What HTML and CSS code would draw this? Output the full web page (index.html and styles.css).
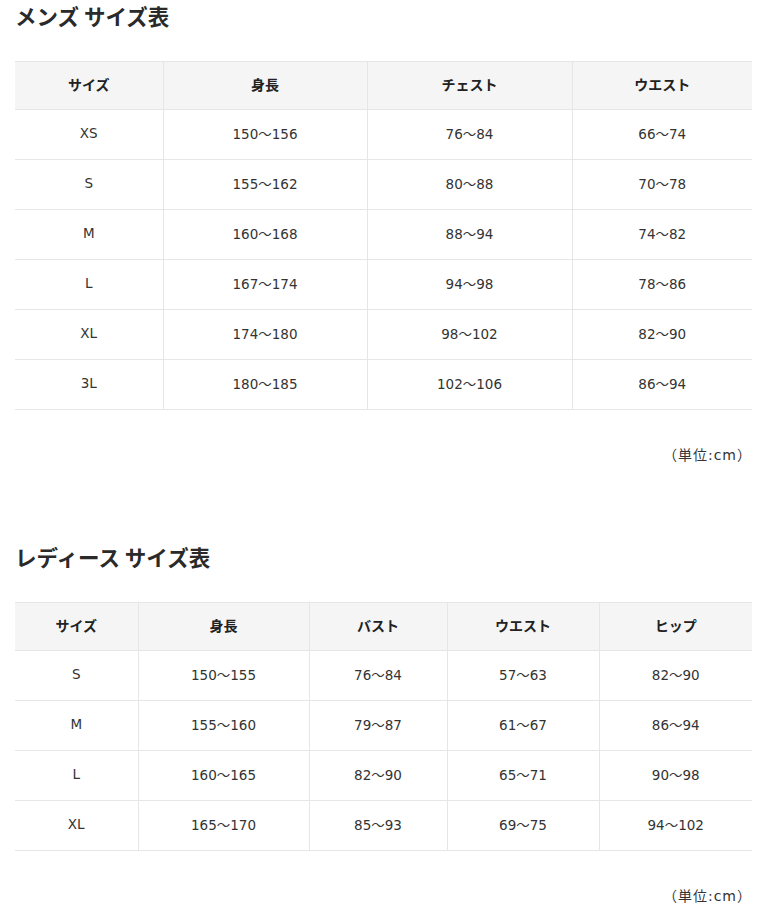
FILE: index.html
```html
<!DOCTYPE html>
<html lang="ja">
<head>
<meta charset="utf-8">
<title>サイズ表</title>
<link rel="stylesheet" href="styles.css">
</head>
<body>
<div class="page">
  <section class="block">
    <h2 class="title">メンズ サイズ表</h2>
    <table class="size-table">
      <colgroup>
        <col class="m1"><col class="m2"><col class="m3"><col class="m4">
      </colgroup>
      <thead>
        <tr><th>サイズ</th><th>身長</th><th>チェスト</th><th>ウエスト</th></tr>
      </thead>
      <tbody>
        <tr><td>XS</td><td>150〜156</td><td>76〜84</td><td>66〜74</td></tr>
        <tr><td>S</td><td>155〜162</td><td>80〜88</td><td>70〜78</td></tr>
        <tr><td>M</td><td>160〜168</td><td>88〜94</td><td>74〜82</td></tr>
        <tr><td>L</td><td>167〜174</td><td>94〜98</td><td>78〜86</td></tr>
        <tr><td>XL</td><td>174〜180</td><td>98〜102</td><td>82〜90</td></tr>
        <tr><td>3L</td><td>180〜185</td><td>102〜106</td><td>86〜94</td></tr>
      </tbody>
    </table>
    <p class="unit">（単位:cm）</p>
  </section>
  <section class="block block-second">
    <h2 class="title">レディース サイズ表</h2>
    <table class="size-table">
      <colgroup>
        <col class="l1"><col class="l2"><col class="l3"><col class="l4"><col class="l5">
      </colgroup>
      <thead>
        <tr><th>サイズ</th><th>身長</th><th>バスト</th><th>ウエスト</th><th>ヒップ</th></tr>
      </thead>
      <tbody>
        <tr><td>S</td><td>150〜155</td><td>76〜84</td><td>57〜63</td><td>82〜90</td></tr>
        <tr><td>M</td><td>155〜160</td><td>79〜87</td><td>61〜67</td><td>86〜94</td></tr>
        <tr><td>L</td><td>160〜165</td><td>82〜90</td><td>65〜71</td><td>90〜98</td></tr>
        <tr><td>XL</td><td>165〜170</td><td>85〜93</td><td>69〜75</td><td>94〜102</td></tr>
      </tbody>
    </table>
    <p class="unit">（単位:cm）</p>
  </section>
</div>
</body>
</html>
```
FILE: styles.css
```css
html, body {
  margin: 0;
  padding: 0;
  background: #fff;
}
body {
  font-family: "Noto Sans CJK JP", "Noto Sans", sans-serif;
  color: #333;
}
.page {
  width: 737px;
  margin-left: 15px;
}
.block-second {
  margin-top: 76px;
}
.title {
  margin: 0 0 30px;
  font-size: 21.5px;
  line-height: 31px;
  font-weight: 700;
  color: #2a2a2a;
}
.size-table {
  width: 737px;
  border-collapse: collapse;
  table-layout: fixed;
  font-size: 14px;
}
.size-table th,
.size-table td {
  text-align: center;
  padding: 0 0 3px;
  border-top: 1px solid #e6e6e6;
  border-bottom: 1px solid #e6e6e6;
  border-left: 1px solid #e6e6e6;
}
.size-table th:first-child,
.size-table td:first-child {
  border-left: none;
}
.size-table th {
  height: 44px;
  background: #f5f5f5;
  font-weight: 700;
  color: #222;
}
.size-table td {
  height: 46px;
  font-family: "DejaVu Sans", "Noto Sans CJK JP", sans-serif;
  font-size: 13.5px;
  font-weight: 400;
}
.m1 { width: 148px; }
.m2 { width: 204px; }
.m3 { width: 205px; }
.m4 { width: 180px; }
.l1 { width: 123px; }
.l2 { width: 171px; }
.l3 { width: 138px; }
.l4 { width: 152px; }
.l5 { width: 153px; }
.unit {
  margin: 35px 0 0;
  text-align: right;
  font-family: "DejaVu Sans", "Noto Sans CJK JP", sans-serif;
  font-size: 14px;
  letter-spacing: 1px;
  line-height: 20px;
  padding-right: 0;
}
```
